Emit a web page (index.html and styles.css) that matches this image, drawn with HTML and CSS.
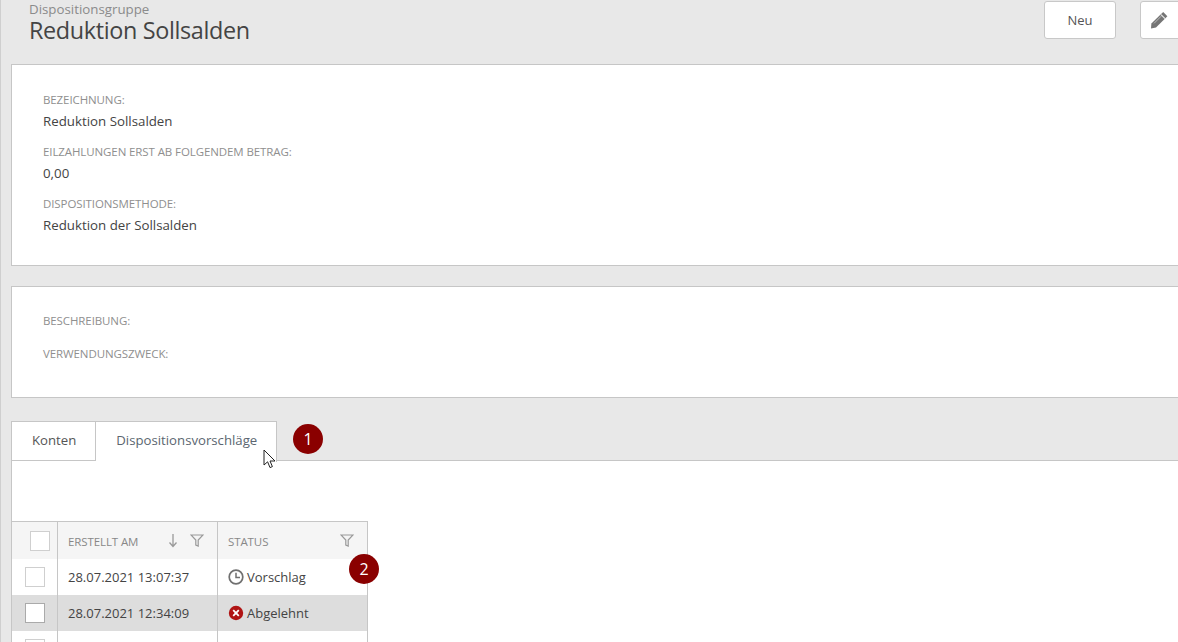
FILE: index.html
```html
<!DOCTYPE html>
<html>
<head>
    <title>Dispositionsgruppe</title>
    <link rel="stylesheet" href="styles.css">
</head>
<body>
    <div class="page">
        <div class="page-head">
            <div class="titles">
                <div class="subtitle">Dispositionsgruppe</div>
                <h1>Reduktion Sollsalden</h1>
            </div>
            <div class="actions">
                <button class="btn">Neu</button>
                <button class="btn btn-icon">
                    <svg width="20" height="20" viewBox="0 0 20 20"><path d="M14.2 2 L18.4 6.2 L7 17.6 L2 18.4 L2.4 13.6 Z" fill="#757575"/><path d="M12 4.6 L16 8.6" stroke="#e7e7e7" stroke-width="1.2"/><path d="M5 13.4 L12.2 6.2" stroke="#bbb" stroke-width="1"/></svg>
                </button>
            </div>
        </div>

        <div class="card card-main">
            <div class="field">
                <label>Bezeichnung:</label>
                <div class="value">Reduktion Sollsalden</div>
            </div>
            <div class="field">
                <label>Eilzahlungen erst ab folgendem Betrag:</label>
                <div class="value">0,00</div>
            </div>
            <div class="field">
                <label>Dispositionsmethode:</label>
                <div class="value">Reduktion der Sollsalden</div>
            </div>
        </div>

        <div class="card card-notes">
            <label>Beschreibung:</label>
            <label>Verwendungszweck:</label>
        </div>

        <div class="tabs">
            <div class="tab">Konten</div>
            <div class="tab tab-active">
                Dispositionsvorschläge
                <svg class="cursor" width="15" height="21" viewBox="0 0 15 21"><path d="M1 1 V16 L4.6 12.8 L7 18.6 L9.4 17.6 L7 12 H12 Z" fill="#fff" stroke="#222" stroke-width="1"/></svg>
            </div>
            <div class="badge badge-one">1</div>
        </div>

        <div class="tab-content">
            <div class="grid">
                <div class="grid-row grid-head">
                    <div class="cell cell-check"><span class="check check-big"></span></div>
                    <div class="cell cell-date">
                        <span class="head-label">Erstellt am</span>
                        <svg class="sort" width="10" height="15" viewBox="0 0 10 15"><path d="M5 1 V13 M1.5 9.5 L5 13.5 L8.5 9.5" fill="none" stroke="#999" stroke-width="1.3"/></svg>
                        <svg class="filter" width="14" height="13" viewBox="0 0 14 13"><path d="M1 1 H13 L8.2 6 V12 L5.8 11 V6 Z" fill="none" stroke="#999" stroke-width="1.2"/></svg>
                    </div>
                    <div class="cell cell-status">
                        <span class="head-label">Status</span>
                        <svg class="filter" width="14" height="13" viewBox="0 0 14 13"><path d="M1 1 H13 L8.2 6 V12 L5.8 11 V6 Z" fill="none" stroke="#999" stroke-width="1.2"/></svg>
                    </div>
                </div>
                <div class="grid-row">
                    <div class="cell cell-check"><span class="check"></span></div>
                    <div class="cell cell-date">28.07.2021 13:07:37</div>
                    <div class="cell cell-status">
                        <svg width="16" height="16" viewBox="0 0 16 16"><circle cx="8" cy="8" r="6.8" fill="none" stroke="#707070" stroke-width="1.7"/><path d="M8 3.8 V8.4 H12" fill="none" stroke="#707070" stroke-width="1.5"/></svg>
                        Vorschlag
                    </div>
                </div>
                <div class="grid-row grid-row-selected">
                    <div class="cell cell-check"><span class="check check-dark"></span></div>
                    <div class="cell cell-date">28.07.2021 12:34:09</div>
                    <div class="cell cell-status">
                        <svg width="16" height="16" viewBox="0 0 16 16"><circle cx="8" cy="8" r="7.2" fill="#b01414"/><path d="M5.2 5.2 L10.8 10.8 M10.8 5.2 L5.2 10.8" stroke="#fff" stroke-width="1.8"/></svg>
                        Abgelehnt
                    </div>
                </div>
                <div class="grid-row">
                    <div class="cell cell-check"><span class="check"></span></div>
                    <div class="cell cell-date"></div>
                    <div class="cell cell-status"></div>
                </div>
                <div class="badge badge-two">2</div>
            </div>
        </div>
    </div>
</body>
</html>
```

FILE: styles.css
```css
html, body {
    margin: 0;
    height: 100%;
    overflow: hidden;
}

body {
    background: #e8e8e8;
    font-family: "Open Sans", "Noto Sans", sans-serif;
    color: #444;
    font-size: 13px;
}

.page {
    width: 1230px;
    height: 642px;
    box-sizing: border-box;
    padding-left: 10px;
    border-left: 1px solid #cfcfcf;
}

.page-head {
    display: flex;
    justify-content: space-between;
    height: 64px;
    padding-left: 18px;
}

.subtitle {
    font-size: 13.3px;
    line-height: 18px;
    color: #8b8b8b;
}

h1 {
    margin: 0;
    font-size: 23.4px;
    font-weight: 400;
    line-height: 24px;
    letter-spacing: -0.35px;
    color: #444;
}

.actions {
    display: flex;
    gap: 24px;
    padding-right: 44px;
    padding-top: 1px;
    align-items: flex-start;
}

.btn {
    width: 72px;
    height: 38px;
    background: #fff;
    border: 1px solid #c8c8c8;
    border-radius: 3px;
    font-family: inherit;
    font-size: 13px;
    color: #555;
    padding: 0;
}

.btn-icon {
    width: 46px;
    display: flex;
    align-items: center;
    padding-left: 8px;
}

.card {
    background: #fff;
    border: 1px solid #c6c6c6;
    box-sizing: border-box;
    padding-left: 31px;
}

.card-main {
    height: 202px;
    padding-top: 27px;
}

.card-notes {
    height: 112px;
    margin-top: 20px;
    padding-top: 26px;
    display: flex;
    flex-direction: column;
    gap: 17px;
}

label {
    display: block;
    font-size: 11.5px;
    line-height: 16px;
    color: #8f8f8f;
    text-transform: uppercase;
    letter-spacing: -0.1px;
}

.field {
    height: 52px;
}

.value {
    margin-top: 3px;
    font-size: 13.3px;
    line-height: 20px;
    color: #444;
}

.tabs {
    display: flex;
    align-items: flex-start;
    margin-top: 23px;
    height: 39px;
}

.tab {
    position: relative;
    box-sizing: border-box;
    height: 40px;
    background: #fff;
    border: 1px solid #c6c6c6;
    font-size: 13.2px;
    line-height: 37px;
    padding: 0 19px 0 20px;
    color: #555;
}

.tab-active {
    border-left: 0;
    border-bottom: 0;
    height: 41px;
    z-index: 1;
    color: #5b6670;
}

.cursor {
    position: absolute;
    left: 167px;
    top: 27px;
}

.badge {
    position: absolute;
    width: 30px;
    height: 30px;
    border-radius: 50%;
    background: #8a0000;
    color: #fff;
    font-size: 16px;
    line-height: 30px;
    text-align: center;
    z-index: 2;
}

.badge-one {
    left: 293px;
    top: 424px;
}

.badge-two {
    left: 349px;
    top: 554px;
}

.tab-content {
    background: #fff;
    border: 1px solid #c6c6c6;
    border-right: 0;
    height: 190px;
    box-sizing: border-box;
    padding-top: 60px;
}

.grid {
    width: 356px;
    box-sizing: border-box;
    border-top: 1px solid #c6c6c6;
    border-right: 1px solid #c6c6c6;
}

.grid-row {
    display: grid;
    grid-template-columns: 46px 160px 1fr;
    height: 36px;
    font-size: 13px;
}

.grid-head {
    height: 37px;
    background: #f5f5f5;
}

.grid-row-selected {
    background: #dddddd;
}

.cell {
    display: flex;
    align-items: center;
    box-sizing: border-box;
    border-right: 1px solid #c6c6c6;
    padding-left: 10px;
    gap: 3px;
}

.cell-status {
    border-right: 0;
}

.cell-check {
    padding-left: 13px;
}

.check {
    display: block;
    width: 20px;
    height: 20px;
    box-sizing: border-box;
    background: #fff;
    border: 1px solid #cfcfcf;
}

.check-big {
    margin-left: 5px;
}

.check-dark {
    border-color: #aaa;
}

.head-label {
    font-size: 11.5px;
    text-transform: uppercase;
    color: #888;
    letter-spacing: -0.1px;
    flex: 1;
    padding-top: 2px;
}

.sort {
    margin-right: 9px;
}

.filter {
    margin-right: 13px;
}
```
